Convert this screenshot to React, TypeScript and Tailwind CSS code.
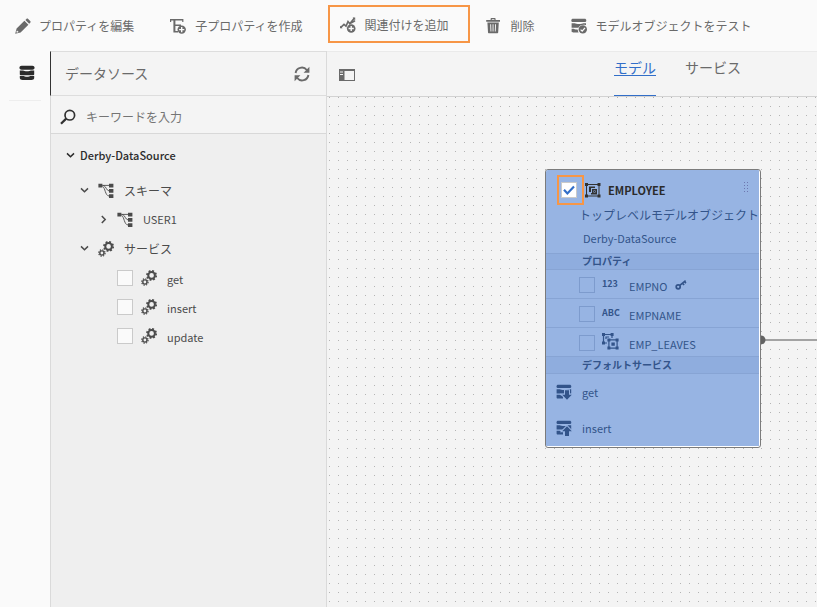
import React, { useState } from "react";

type IconProps = { className?: string };

const Svg = ({ className = "", children }: IconProps & { children: React.ReactNode }) => (
  <svg viewBox="0 0 16 16" fill="currentColor" aria-hidden="true" className={`size-4 shrink-0 ${className}`}>
    {children}
  </svg>
);

const PencilIcon = (p: IconProps) => (
  <Svg {...p}>
    <path d="M1.600 10.600 9.400 2.800l4 4-7.800 7.800L.2 15.800z M10.400 1.900l1-1c.6-.6 1.200-.6 1.800 0l2 2c.6.600.6 1.200 0 1.800l-1 1z" />
    <path d="M2 12.400l1.700 1.700-1.700.7-.7-.7z" fill="#fafafa" />
  </Svg>
);

const AddChildIcon = (p: IconProps) => (
  <Svg {...p}>
    <path d="M0 1h13.400v3h-1.200V2.600H5.400V6.400H11V8H5.400v5H8v1.600H3.400v-12H1.200V4H0z" />
    <circle cx="11.700" cy="11.600" r="4.200" />
    <path d="M11 9h1.400v1.900h1.900v1.400h-1.900v1.900H11v-1.900H9.100v-1.400H11z" fill="#fafafa" />
  </Svg>
);

const AddAssociationIcon = (p: IconProps) => (
  <Svg {...p}>
    <path d="M.6 10.600 4 7.400l2 1.800 2-4.600 1.800 2.200L14.400 1M10.400 6.400l4.600-2.600" fill="none" stroke="currentColor" strokeWidth="1.600" />
    <path d="M0 8.800l2.600 2.400H0zM12.600.4h2.600v3z" />
    <circle cx="11.200" cy="11.500" r="4.300" />
    <path d="M10.500 8.900h1.400v1.900h1.900v1.400h-1.900v1.900h-1.400v-1.900H8.600v-1.400h1.900z" fill="#fafafa" />
  </Svg>
);

const TrashIcon = (p: IconProps) => (
  <Svg {...p}>
    <path fillRule="evenodd" d="M.2 2h4.400V1c0-.6.400-1 1-1h3c.6 0 1 .4 1 1v1H14v1.800H.2zM5.800 1.200V2h2.600v-.8z" />
    <path
      fillRule="evenodd"
      d="M1.400 4.600h11.400L12.200 14.200c0 .6-.4 1-1 1H3c-.6 0-1-.4-1-1zM4.200 6.200l.3 7.400h.9l-.3-7.400zm2.400 0v7.400h.9V6.200zm2.500 0-.3 7.400h.9l.3-7.400z"
    />
  </Svg>
);

const DatabaseIcon = (p: IconProps) => (
  <Svg {...p}>
    <path d="M2.600.800h10.800c1.200 0 2.200.8 2.200 2s-1 2-2.200 2H2.600C1.400 4.800.4 4 .4 2.800s1-2 2.200-2z" />
    <path d="M.8 5.600h3.400c.8 1 6.800 1 7.600 0h3.400v3.600c0 .7-.6 1.100-1.400 1.100H2.200c-.8 0-1.400-.4-1.400-1.100z" />
    <path d="M.8 11h4c.6.900 5.800.9 6.400 0h4v2c0 1.200-1.200 2-2.800 2H3.600C2 15 .8 14.200.8 13z" />
  </Svg>
);

const DatabaseCheckIcon = (p: IconProps) => (
  <Svg {...p}>
    <path d="M2 .800h11.600c1 0 1.700.7 1.700 1.600S14.600 4 13.600 4H2C1 4 .3 3.300.3 2.400S1 .8 2 .8z" />
    <path d="M.6 5.200h3.200c1 1 7.600 1 8.600 0H15v2c-3.600-1.200-6.600.4-7.600 2.600H.6zM.6 10.800h2.200c1 .6 2.800.9 4 .9 0 1 .3 2 .8 2.700H2C1.200 14.400.6 14 .6 13.200z" />
    <circle cx="11.800" cy="11.400" r="4.200" />
    <path d="m9.600 11.600 1.600 1.500 2.800-3.300" fill="none" stroke="#fafafa" strokeWidth="1.300" />
  </Svg>
);

const DatabaseArrowIcon = ({ up = false, className }: IconProps & { up?: boolean }) => (
  <Svg className={className}>
    <path d="M2.200.800h11.400c1 0 1.700.7 1.700 1.600S14.600 4 13.600 4H2.200C1.200 4 .5 3.300.5 2.400S1.200.8 2.200.8z" />
    <path d="M.6 5.200h3.200c1 1 7.600 1 8.600 0h2.800v4.400H.6zM.6 10.800h3c1 .6 2 .9 3.400.9v2.900H2.200c-.9 0-1.600-.4-1.600-1.200z" />
    {up ? (
      <path d="m11 6.200 4.800 5H13V16H9v-4.800H6.200z" stroke="#97b4e3" strokeWidth="2" paintOrder="stroke" />
    ) : (
      <path d="M9 6.200h4v4.600h2.800L11 15.800l-4.800-5H9z" stroke="#97b4e3" strokeWidth="2" paintOrder="stroke" />
    )}
  </Svg>
);

const RefreshIcon = (p: IconProps) => (
  <Svg {...p}>
    <path d="M1.600 7A6.300 6.300 0 0 1 12.800 4M14.400 9A6.300 6.300 0 0 1 3.200 12" fill="none" stroke="currentColor" strokeWidth="1.900" />
    <path d="M15.400.800v6H9.600zM.6 15.200v-6h5.800z" />
  </Svg>
);

const SearchIcon = (p: IconProps) => (
  <Svg {...p}>
    <circle cx="9.800" cy="6.200" r="4.800" fill="none" stroke="currentColor" strokeWidth="1.700" />
    <path d="M6.200 9.600 1 14.800" stroke="currentColor" strokeWidth="2.200" />
  </Svg>
);

const PanelIcon = (p: IconProps) => (
  <Svg {...p}>
    <path fillRule="evenodd" d="M0 2h16v12H0zM5.500 4v9H15V4zM1 4.500v1h3v-1zM1 7v1h3V7z" />
  </Svg>
);

const SchemaIcon = (p: IconProps) => (
  <Svg {...p}>
    <path d="M.4.800h4v3.600h-4zM11 .800h4.400v3.800H11zM11 6h4.400v3.800H11zM11 11.200h4.400V15H11z" />
    <path d="M4.400 2.400H11M4.400 2.800 6 2.600c1.800.8 2.600 5 5 5.300M4.600 3.400C7.400 5 7 12.600 11 13" fill="none" stroke="currentColor" strokeWidth=".9" />
  </Svg>
);

const GearsIcon = (p: IconProps) => (
  <Svg {...p}>
    <g fill="none" stroke="currentColor">
      <circle cx="10.600" cy="5.400" r="3.300" strokeWidth="2" />
      <circle cx="10.600" cy="5.400" r="4.600" strokeWidth="1.700" strokeDasharray="1.900 1.710" />
      <circle cx="3.900" cy="12" r="2.100" strokeWidth="1.400" />
      <circle cx="3.900" cy="12" r="3.200" strokeWidth="1.200" strokeDasharray="1.300 1.213" />
    </g>
  </Svg>
);

const ObjectIcon = (p: IconProps) => (
  <Svg {...p}>
    <path d="M0 1h3v3H0zM12.500 1h3v3h-3zM0 12.500h3v3H0zM12.500 12.500h3v3h-3z" />
    <path d="M1.500 2.500H14V14H1.500z" fill="none" stroke="currentColor" strokeWidth="1" />
    <path d="M4 4.500h6V6H6v4H4zM7 7h5v5.500H6V11h1z" />
    <path d="M8.500 8.500h2v2h-2z" fill="#97b4e3" />
    <path d="M9 9h1v1H9z" />
  </Svg>
);

const AssociationIcon = () => (
  <svg viewBox="0 0 17 17" fill="currentColor" aria-hidden="true" className="size-[17px] shrink-0">
    <path d="M0 0h3v3H0zM8.600 0h3v3h-3zM0 8.600h3v3H0zM5.400 5.400h3v3h-3zM13.600 5.400h3v3h-3zM5.400 13.600h3v3h-3zM13.600 13.600h3v3h-3zM9.400 9.400h3.400v3.400H9.400z" />
    <path d="M5 10H1.500V1.500H10V5M4 6V4h3M6.900 6.900h8.200v8.200H6.900z" fill="none" stroke="currentColor" strokeWidth="1.200" />
  </svg>
);

const KeyIcon = () => (
  <svg viewBox="0 0 12 12" aria-hidden="true" className="size-3 shrink-0" fill="none" stroke="currentColor">
    <circle cx="3.200" cy="7.800" r="2" strokeWidth="1.700" />
    <path d="M4.800 6.400 10.600 1.600M7.600 4.200l1.500 1.800M9.600 2.600l1.300 1.600" strokeWidth="1.600" />
  </svg>
);

const Chevron = ({ open }: { open: boolean }) => (
  <svg viewBox="0 0 9 9" aria-hidden="true" className="size-[9px] shrink-0" fill="none" stroke="currentColor" strokeWidth="1.500">
    {open ? <path d="M1 2.400 4.500 5.800 8 2.400" /> : <path d="M2.800 1 6.200 4.500 2.800 8" />}
  </svg>
);

function ServiceRow({ name }: { name: string }) {
  return (
    <label className="flex h-[29px] items-center pl-[66px]">
      <input type="checkbox" className="size-4 appearance-none border border-[#cacaca] bg-[#fafafa] checked:bg-[#326ec8]" />
      <GearsIcon className="ml-2" />
      <span className="ml-[10px] pt-1 text-[11px]">{name}</span>
    </label>
  );
}

function PropertyRow({ name, icon, isKey = false }: { name: string; icon: React.ReactNode; isKey?: boolean }) {
  return (
    <label className="flex h-[29px] items-center border-b border-[#87a4d4] pt-px pl-[33px]">
      <input type="checkbox" className="size-4 appearance-none border border-[#7d9bcd] bg-transparent checked:bg-[#326ec8]" />
      <span className="ml-[7px] w-[27px] pb-[2px] text-[9px] leading-4 font-bold">{icon}</span>
      <span className="pt-[2px] text-[11px]">{name}</span>
      {isKey && <span className="ml-[7px]"><KeyIcon /></span>}
    </label>
  );
}

function ModelCard() {
  const [checked, setChecked] = useState(true);
  return (
    <article className="absolute top-[72px] left-[218px] w-[216px] overflow-hidden rounded-[3px] border border-[#7b7b7b] bg-white pr-px pb-px text-[#33548a]">
      <div className="bg-[#97b4e3] leading-5">
        <header className="h-[83px] pt-[5px]">
          <div className="flex h-[30px] items-center pl-[11px]">
            <label className="flex h-[30px] w-[27px] items-center border-2 border-[#f79646] pl-[2px]">
              <span className="relative flex">
                <input
                  type="checkbox"
                  aria-label="EMPLOYEE"
                  checked={checked}
                  onChange={(e) => setChecked(e.target.checked)}
                  className="size-4 appearance-none border border-[#cacaca] bg-white"
                />
                {checked && (
                  <svg viewBox="0 0 16 16" className="pointer-events-none absolute inset-0 size-4" fill="none" stroke="#326ec8" strokeWidth="2.200">
                    <path d="m3 7.800 3.400 3.600L13 4.600" />
                  </svg>
                )}
              </span>
            </label>
            <ObjectIcon className="ml-px text-[#323232]" />
            <h2 className="ml-[7px] pb-px text-[11px] font-bold text-[#2b2b2b]">EMPLOYEE</h2>
            <svg viewBox="0 0 5 12" className="mr-[10px] mb-1 ml-auto h-3 w-[5px]" fill="#6d77b0" aria-hidden="true">
              {[0, 3, 6, 9].map((y) => (
                <path key={y} d={`M0 ${y}h1v1H0zM3 ${y}h1v1H3z`} />
              ))}
            </svg>
          </div>
          <p className="pl-[33px] whitespace-nowrap">トップレベルモデルオブジェクト</p>
          <p className="pt-[3px] pl-[37px] text-[11px] leading-5">Derby-DataSource</p>
        </header>
        <h3 className="h-[17px] border-y border-[#87a4d4] bg-[#8fadde] pl-9 text-[10px] leading-[13px] font-bold">プロパティ</h3>
        <PropertyRow name="EMPNO" icon="123" isKey />
        <PropertyRow name="EMPNAME" icon="ABC" />
        <PropertyRow name="EMP_LEAVES" icon={<AssociationIcon />} />
        <h3 className="h-[17px] border-b border-[#87a4d4] bg-[#8fadde] pl-9 text-[10px] leading-4 font-bold">デフォルトサービス</h3>
        <button className="flex h-9 w-full items-center gap-[10px] pl-[10px] text-[11px]"><DatabaseArrowIcon />get</button>
        <button className="flex h-9 w-full items-center gap-[10px] pl-[10px] text-[11px]"><DatabaseArrowIcon up />insert</button>
      </div>
    </article>
  );
}

export default function App() {
  return (
    <div className="flex min-h-screen flex-col bg-[#fafafa] font-['Noto_Sans_CJK_JP',sans-serif] text-xs text-[#4b4b4b]">
      <div role="toolbar" className="flex h-[51px] shrink-0 items-center pl-[15px] whitespace-nowrap text-[#6a6a6a]">
        <button className="flex items-center gap-2"><PencilIcon />プロパティを編集</button>
        <button className="ml-9 flex items-center gap-[9px]"><AddChildIcon />子プロパティを作成</button>
        <button className="ml-[25px] mt-[5px] flex h-[38px] w-[142px] items-center gap-[9px] self-start border-2 border-[#f79646] pt-[2px] pl-[10px]">
          <AddAssociationIcon />関連付けを追加
        </button>
        <button className="ml-4 flex items-center gap-[9px]"><TrashIcon />削除</button>
        <button className="ml-9 flex items-center gap-[9px]"><DatabaseCheckIcon />モデルオブジェクトをテスト</button>
      </div>

      <div className="flex flex-1">
        <nav className="w-[50px] shrink-0 px-[9px]">
          <button aria-label="データソース" className="flex h-[50px] w-full items-center justify-center border-b border-[#eeeeee] pb-[5px] pl-[3px] text-[#2b2b2b]">
            <DatabaseIcon />
          </button>
        </nav>

        <aside className="flex w-[277px] shrink-0 flex-col border-r border-[#dadada] bg-[#efefef]">
          <div className="flex h-[45px] items-center justify-between border-y border-l border-t-[#dddddd] border-b-[#dddddd] border-l-[#323232] bg-[#f4f4f4] pr-4 pl-[14px] text-[#6a6a6a]">
            <h1 className="pb-[2px] text-sm">データソース</h1>
            <button aria-label="更新"><RefreshIcon /></button>
          </div>
          <label className="flex h-[38px] items-center gap-[10px] border-b border-l border-[#d8d8d8] bg-[#f4f4f4] pt-1 pl-[9px] text-[#323232]">
            <SearchIcon />
            <input type="text" aria-label="検索" placeholder="キーワードを入力" className="w-48 bg-transparent outline-none placeholder:text-[#747474]" />
          </label>
          <div className="flex-1 border-l border-[#dadada] pt-[7px]">
            <button className="mb-[6px] flex h-[29px] items-center gap-[5px] pl-[15px] text-[11px] font-medium text-[#2b2b2b]"><Chevron open />Derby-DataSource</button>
            <button className="flex h-[29px] items-center pl-[29px]"><Chevron open /><SchemaIcon className="mr-[10px] ml-[9px]" />スキーマ</button>
            <button className="flex h-[29px] items-center pl-12 text-[11px]"><Chevron open={false} /><SchemaIcon className="mr-[10px] ml-[9px]" />USER1</button>
            <button className="flex h-[29px] items-center pl-[29px]"><Chevron open /><GearsIcon className="mr-[10px] ml-[9px]" />サービス</button>
            <ServiceRow name="get" />
            <ServiceRow name="insert" />
            <ServiceRow name="update" />
          </div>
        </aside>

        <main className="flex min-w-0 flex-1 flex-col bg-[#f4f4f4]">
          <div className="flex h-[46px] shrink-0 items-center border-t border-b border-t-[#eaeaea] border-b-[#d2d2d2] pl-3 text-[#6a6a6a]">
            <button aria-label="パネルの切り替え" className="pt-[2px]"><PanelIcon /></button>
            <div role="tablist" className="ml-[259px] flex gap-[29px] self-stretch text-sm">
              <button role="tab" aria-selected="true" className="border-b border-[#326ec8] pb-[14px] text-[#326ec8] underline underline-offset-2">モデル</button>
              <button role="tab" aria-selected="false" className="border-b border-transparent pb-[14px]">サービス</button>
            </div>
          </div>
          <div className="relative flex-1 overflow-hidden bg-[conic-gradient(from_270deg_at_1px_1px,#b4b4b4_90deg,transparent_0)] bg-size-[9px_9px] bg-position-[2px_0px]">
            <svg className="absolute top-[238px] left-[434px] h-[11px] w-full" aria-hidden="true">
              <rect x="0" y="4" width="100%" height="2" fill="#a3a3a3" />
              <circle cx="0" cy="5" r="4.500" fill="#636363" />
            </svg>
            <ModelCard />
          </div>
        </main>
      </div>
    </div>
  );
}
